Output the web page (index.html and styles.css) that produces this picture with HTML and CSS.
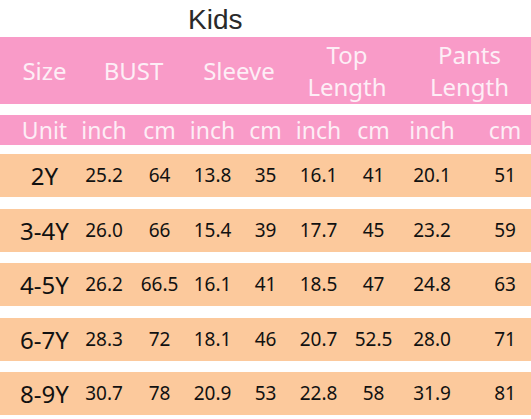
FILE: index.html
```html
<!DOCTYPE html>
<html>
<head>
<meta charset="utf-8">
<link rel="stylesheet" href="styles.css">
</head>
<body>
<div class="title">Kids</div>
<div class="grid head">
  <div class="c1">Size</div>
  <div class="span2">BUST</div>
  <div class="span2">Sleeve</div>
  <div class="span2">Top<br>Length</div>
  <div class="span2 last">Pants<br>Length</div>
</div>
<div class="grid unit">
  <div class="c1">Unit</div><div>inch</div><div>cm</div><div>inch</div><div>cm</div><div>inch</div><div>cm</div><div class="c8">inch</div><div class="c9">cm</div>
</div>
<div class="rows">
  <div class="grid row">
    <div class="c1 size">2Y</div><div>25.2</div><div>64</div><div>13.8</div><div>35</div><div>16.1</div><div>41</div><div class="c8">20.1</div><div class="c9">51</div>
  </div>
  <div class="grid row">
    <div class="c1 size">3-4Y</div><div>26.0</div><div>66</div><div>15.4</div><div>39</div><div>17.7</div><div>45</div><div class="c8">23.2</div><div class="c9">59</div>
  </div>
  <div class="grid row">
    <div class="c1 size">4-5Y</div><div>26.2</div><div>66.5</div><div>16.1</div><div>41</div><div>18.5</div><div>47</div><div class="c8">24.8</div><div class="c9">63</div>
  </div>
  <div class="grid row">
    <div class="c1 size">6-7Y</div><div>28.3</div><div>72</div><div>18.1</div><div>46</div><div>20.7</div><div>52.5</div><div class="c8">28.0</div><div class="c9">71</div>
  </div>
  <div class="grid row">
    <div class="c1 size">8-9Y</div><div>30.7</div><div>78</div><div>20.9</div><div>53</div><div>22.8</div><div>58</div><div class="c8">31.9</div><div class="c9">81</div>
  </div>
</div>
</body>
</html>
```
FILE: styles.css
```css
html, body {
  margin: 0;
  padding: 0;
  background: #ffffff;
}
body {
  width: 531px;
  font-family: "Noto Sans", "Open Sans", sans-serif;
}
.title {
  height: 37px;
  padding-left: 188px;
  box-sizing: border-box;
  font-family: "Liberation Sans", Arial, sans-serif;
  font-size: 28px;
  line-height: 40px;
  color: #2a2a2a;
}
.grid {
  display: grid;
  grid-template-columns: 75px 58px 53px 53px 53px 53px 57px 66px 63px;
  align-items: center;
  text-align: center;
}
.head {
  height: 67px;
  background: #f99bc8;
  color: #fdeef6;
  font-size: 24px;
  line-height: 32px;
}
.span2 {
  grid-column: span 2;
}
.head .span2:nth-child(2) {
  padding-left: 6px;
}
.head .last {
  padding-left: 6px;
}
.c1 {
  padding-left: 14px;
}
.c8 {
  padding-right: 6px;
}
.c9 {
  padding-left: 11px;
}
.unit {
  margin-top: 11px;
  height: 30px;
  background: #f99bc8;
  color: #fdeef6;
  font-size: 23px;
  line-height: 30px;
}
.rows {
  margin-top: 9px;
  display: flex;
  flex-direction: column;
  gap: 11.5px;
}
.row {
  height: 43px;
  background: #fcc99c;
  color: #111111;
  font-size: 19px;
  line-height: 43px;
}
.size {
  font-size: 24px;
}
```
